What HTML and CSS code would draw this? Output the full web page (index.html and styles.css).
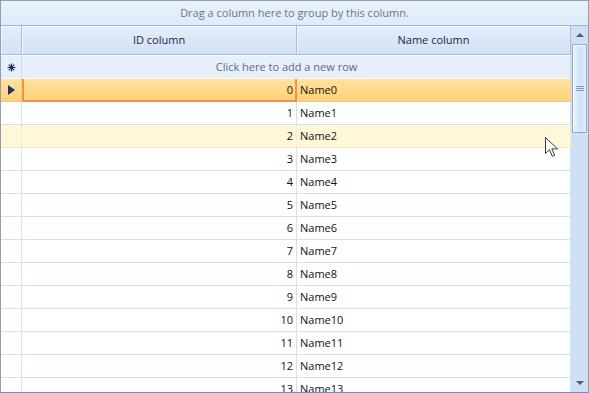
FILE: index.html
```html
<!DOCTYPE html>
<html lang="en">

<head>
  <meta charset="UTF-8">
  <meta name="viewport" content="width=device-width, initial-scale=1.0">
  <title>Grid view</title>
  <link rel="stylesheet" href="styles.css">
</head>

<body>
  <div class="grid-view">
    <div class="group-panel">Drag a column here to group by this column.</div>
    <div class="content">
      <div class="rows">
        <div class="row header">
          <div class="cell"></div>
          <div class="cell">ID column</div>
          <div class="cell">Name column</div>
        </div>
        <div class="row new-row">
          <div class="cell indicator">
            <svg width="9" height="9" viewBox="0 0 9 9">
              <path d="M4.5 0.5v8M0.5 4.5h8M1.7 1.7l5.6 5.6M7.3 1.7l-5.6 5.6" stroke="#1d2f5c" stroke-width="1.2" />
              <circle cx="4.5" cy="4.5" r="1.8" fill="#1d2f5c" />
            </svg>
          </div>
          <div class="cell add-text">Click here to add a new row</div>
        </div>
        <div class="data"></div>
      </div>
      <div class="scrollbar">
        <div class="scroll-btn"><span class="arrow up"></span></div>
        <div class="thumb"><span class="grip"></span></div>
        <div class="track"></div>
        <div class="scroll-btn"><span class="arrow down"></span></div>
      </div>
    </div>
    <svg class="cursor" width="13" height="21" viewBox="0 0 13 21">
      <path d="M0.5 0.5v16l4-3.8 2.8 6.6 2.4-1-2.8-6.4h5.6z" fill="#fff" stroke="#3a3a3a" stroke-width="1" stroke-linejoin="round" />
    </svg>
  </div>
  <script>
    (function () {
      const data = document.querySelector('.data');
      const rows = [];
      for (let i = 0; i < 14; i++) {
        const cls = i === 0 ? ' current' : (i === 2 ? ' hover' : '');
        const mark = i === 0 ? '<svg width="7" height="10" viewBox="0 0 7 10"><path d="M0 0l7 5-7 5z" fill="#1b3566"/></svg>' : '';
        rows.push(`<div class="row${cls}"><div class="cell indicator">${mark}</div><div class="cell id">${i}</div><div class="cell">Name${i}</div></div>`);
      }
      data.innerHTML = rows.join('');
    })()
  </script>
</body>

</html>
```

FILE: styles.css
```css
body {
  margin: 0;
  font-family: "Open Sans", "DejaVu Sans", sans-serif;
  font-size: 11px;
}

.grid-view {
  position: relative;
  width: 589px;
  height: 393px;
  box-sizing: border-box;
  border: 1px solid #8e9fb6;
  border-bottom-color: #6592cf;
  background: #fff;
  display: flex;
  flex-direction: column;
  overflow: hidden;
}

.group-panel {
  height: 24px;
  line-height: 24px;
  flex-shrink: 0;
  text-align: center;
  color: #66778e;
  background: linear-gradient(#eaf1fb, #e0eaf8);
  border-bottom: 1px solid #9db5d4;
}

.content {
  flex: 1;
  display: flex;
  min-height: 0;
}

.rows {
  flex: 1;
  overflow: hidden;
}

.row {
  display: grid;
  grid-template-columns: 21px 275px 274px;
  height: 23px;
}

.cell {
  box-sizing: border-box;
  border-right: 1px solid #d3e1f3;
  border-bottom: 1px solid #d3e1f3;
  padding: 0 3px;
  line-height: 22px;
  white-space: nowrap;
  color: #111;
}

.cell.id {
  text-align: right;
}

.indicator {
  display: flex;
  align-items: center;
  justify-content: center;
  padding: 0;
}

.row.header {
  height: 29px;
  background: linear-gradient(#e6eefa, #dbe7f7 50%, #d1e0f5);
}

.row.header .cell {
  border-right: 1px solid #a9c0dd;
  border-bottom: 1px solid #a9c0dd;
  box-shadow: inset 1px 1px 0 #f3f7fd;
  line-height: 28px;
  text-align: center;
  color: #1a2440;
}

.row.new-row {
  height: 24px;
  background: #e7effa;
  border-top: 1px solid #f7faff;
  box-sizing: border-box;
}

.row.new-row .cell {
  border-bottom: 1px solid #f2f6fc;
  border-right-color: #c9d9ef;
  line-height: 22px;
}

.add-text {
  grid-column: 2 / 4;
  text-align: center;
  color: #5a6a80;
  padding-right: 22px;
}

.row.current {
  background: linear-gradient(#ffe3a0, #ffd98a 50%, #ffd075);
}

.row.current .cell {
  border-bottom-color: #f9c678;
  border-right-color: #f9cf86;
}

.row.current .cell.id {
  box-shadow: inset 2px -1px 0 #f7913f, inset -1px 0 0 #f7913f;
  border-bottom-color: #f7913f;
  border-right-color: #f7913f;
}

.row.hover {
  background: #fff8d8;
}

.row.hover .cell {
  border-bottom-color: #fbe9bd;
  border-right-color: #f6ecc9;
}

.scrollbar {
  width: 17px;
  flex-shrink: 0;
  display: flex;
  flex-direction: column;
  background: #cfdff4;
}

.scroll-btn {
  height: 18px;
  flex-shrink: 0;
  display: flex;
  align-items: center;
  justify-content: center;
}

.arrow {
  width: 0;
  height: 0;
  border-left: 4px solid transparent;
  border-right: 4px solid transparent;
}

.arrow.up {
  border-bottom: 4px solid #4b5b77;
}

.arrow.down {
  border-top: 4px solid #4b5b77;
}

.thumb {
  height: 89px;
  margin: 0 1px;
  box-sizing: border-box;
  border: 1px solid #8ba7cd;
  border-radius: 1px;
  background: linear-gradient(90deg, #eef4fc, #dae6f6 40%, #d2e1f5 60%, #e3ecf9);
  box-shadow: inset 1px 1px 0 #fff;
  display: flex;
  align-items: center;
  justify-content: center;
}

.grip {
  width: 8px;
  height: 5px;
  background: linear-gradient(#7e99c3 1px, transparent 1px, transparent 2px, #7e99c3 2px, #7e99c3 3px, transparent 3px, transparent 4px, #7e99c3 4px);
}

.track {
  flex: 1;
}

.cursor {
  position: absolute;
  left: 544px;
  top: 136px;
}
```
